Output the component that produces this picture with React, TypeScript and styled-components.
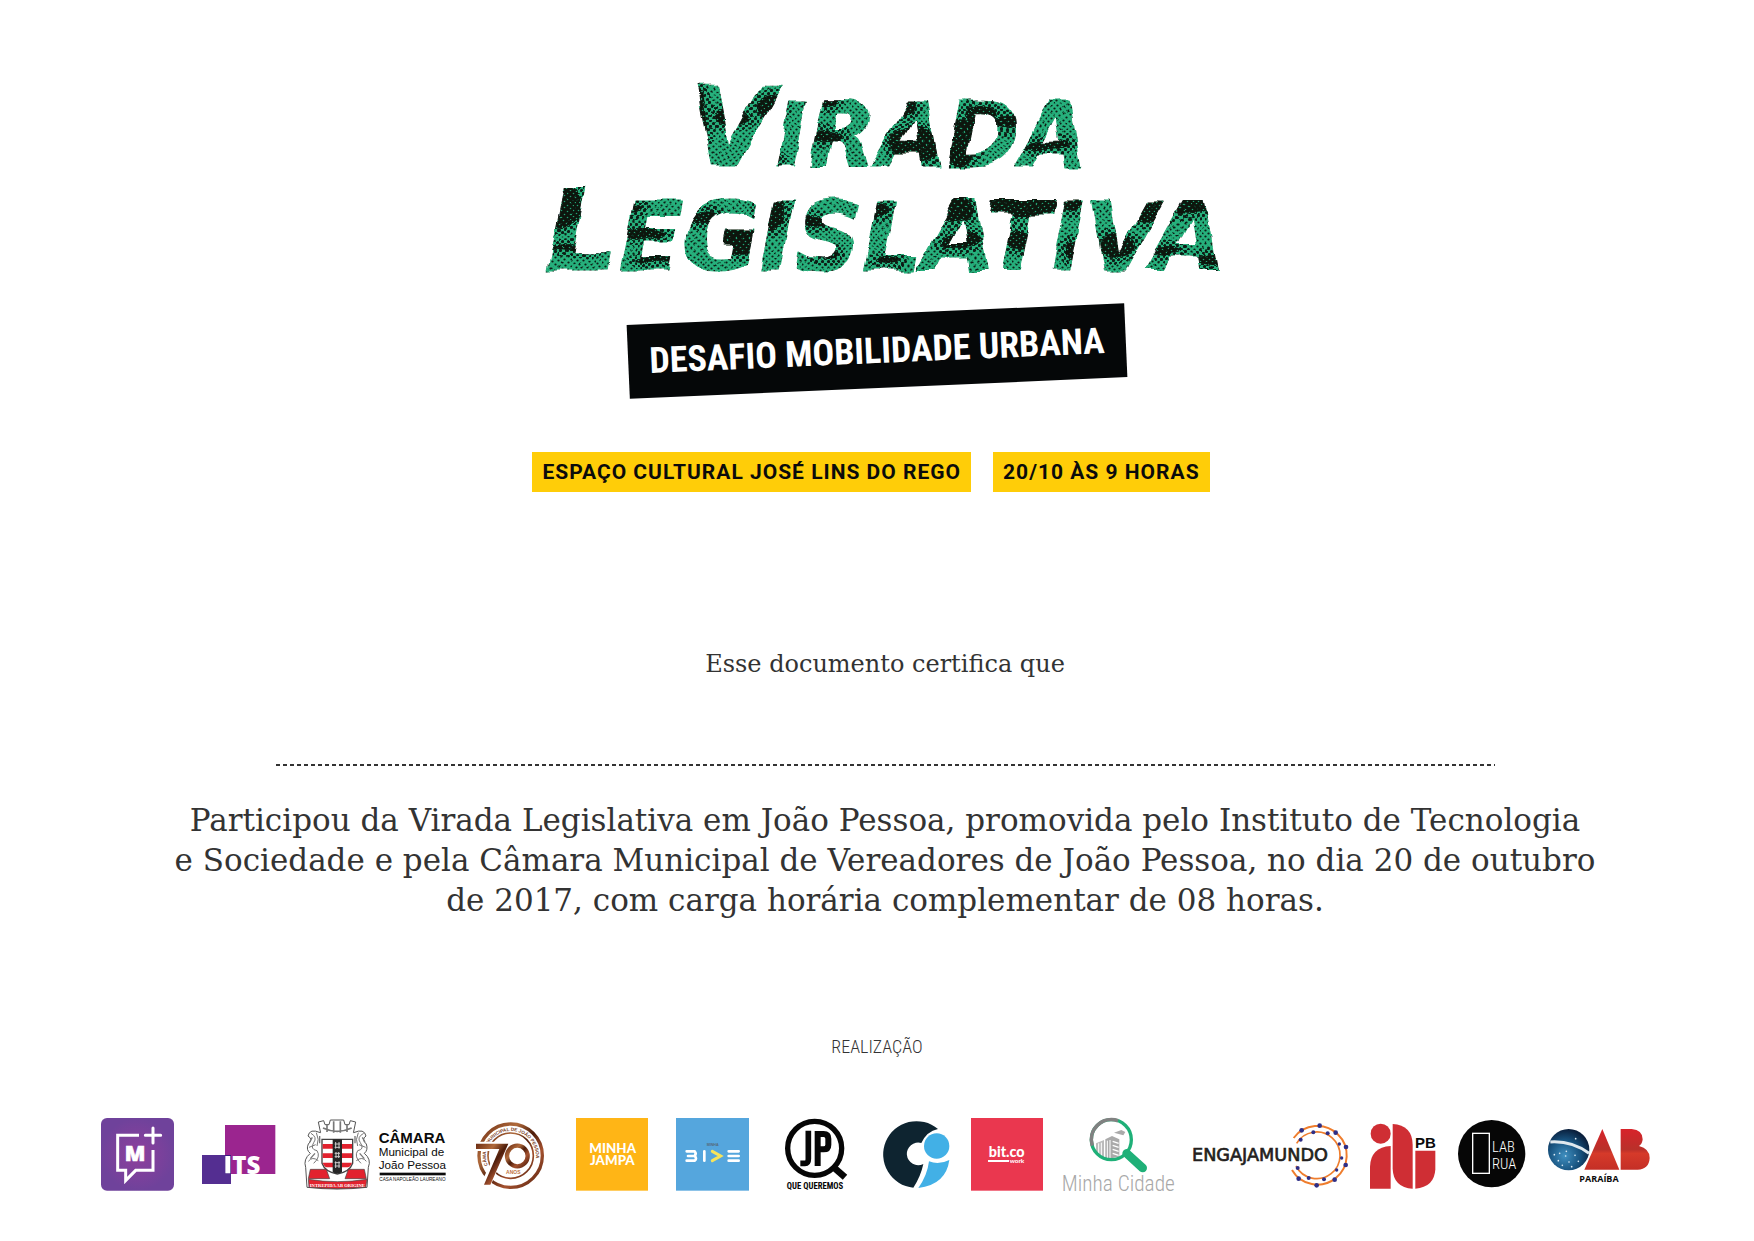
import React from "react";
import styled, { createGlobalStyle } from "styled-components";

const GlobalStyle = createGlobalStyle`
  body { margin: 0; background: #fff; }
  *, *::before, *::after { box-sizing: border-box; }
`;

const narrow = `"Roboto Condensed", "DejaVu Sans Condensed", sans-serif`;

const Page = styled.main`
  display: flex;
  flex-direction: column;
  align-items: center;
  padding: 71px 40px 40px;
  color: #333;
`;

const Title = styled.h1`
  margin: 0;
  line-height: 0;
`;

const TitleArt = styled.svg`
  width: 720px;
  max-width: 100%;
  font-family: "DejaVu Sans", sans-serif;
  font-weight: 700;
  font-style: italic;
`;

const Challenge = styled.h2`
  display: flex;
  align-items: center;
  justify-content: center;
  width: 498px;
  height: 74px;
  margin: 33px 0 64px;
  background: #050708;
  color: #fff;
  font: 700 36px/40px ${narrow};
  transform: rotate(-2.5deg);
`;

const Labels = styled.div`
  display: flex;
  flex-wrap: wrap;
  gap: 22px;
  margin-right: 12px;
`;

const Label = styled.span`
  padding: 0 10px;
  background: #ffcd08;
  color: #0b0b0b;
  font: 700 21px/40px Roboto, sans-serif;
  letter-spacing: 1px;
`;

const Certificate = styled.section`
  display: flex;
  flex-direction: column;
  align-items: center;
  width: 100%;
  padding-left: 16px;
  text-align: center;
  font-family: "DejaVu Serif", serif;
`;

const Intro = styled.p`
  margin: 156px 0 0;
  font-size: 24px;
  line-height: 32px;
`;

const NameLine = styled.div`
  width: 1219px;
  max-width: 100%;
  height: 2px;
  margin: 84px 0 34px;
  background: repeating-linear-gradient(90deg, #333 0 4px, transparent 4px 7px);
`;

const Statement = styled.p`
  margin: 0;
  font-size: 31px;
  line-height: 40px;
`;

const Line = styled.span`
  display: block;
`;

const Heading = styled.h3`
  margin: 115px 0 55px;
  font: 300 18px/24px ${narrow};
`;

const Logos = styled.footer`
  display: flex;
  flex-wrap: wrap;
  justify-content: center;
  gap: 16px;
  width: 100%;
  padding-right: 4px;
`;

const Mark = styled.svg<{ $w: number }>`
  flex: none;
  width: ${(p) => p.$w}px;
  height: 80px;
`;

/* Every mark is drawn on a board three times its printed size. */
function Logo({ x, w, name, children }: { x: number; w: number; name: string; children: React.ReactNode }) {
  return (
    <Mark $w={w} viewBox={`${x} 42 ${w * 3} 240`} role="img" aria-label={name}>
      {children}
    </Mark>
  );
}

const darkPatches: [number, number, number, number][] = [
  [168, 52, 12, 36], [205, 46, 18, 9], [244, 36, 14, 12], [242, 88, 12, 5],
  [300, 66, 16, 6], [297, 30, 14, 6], [370, 34, 18, 9], [388, 74, 24, 18],
  [430, 72, 22, 22], [454, 48, 16, 14], [480, 52, 12, 5], [520, 74, 22, 5], [506, 28, 12, 6],
  [36, 134, 20, 22], [50, 178, 28, 3], [100, 138, 14, 4], [116, 162, 22, 6], [130, 188, 22, 3],
  [176, 148, 18, 6], [212, 170, 22, 12], [244, 140, 13, 20], [284, 150, 18, 5], [300, 184, 12, 4],
  [350, 140, 12, 8], [360, 190, 12, 4], [426, 138, 20, 12], [434, 170, 20, 8],
  [494, 134, 42, 11], [492, 168, 14, 10], [545, 134, 10, 6], [548, 180, 10, 10],
  [624, 140, 22, 12], [590, 174, 18, 11], [664, 134, 22, 9], [640, 180, 14, 4], [686, 188, 16, 6],
];

function HalftonePattern({ id, ground, dot, r }: { id: string; ground: string; dot: string; r: number }) {
  return (
    <pattern id={id} width="6" height="6" patternUnits="userSpaceOnUse">
      <rect width="6" height="6" fill={ground} />
      <circle cx="1.5" cy="1.5" r={r} fill={dot} />
      <circle cx="4.5" cy="4.5" r={r} fill={dot} />
    </pattern>
  );
}

function TitleLettering() {
  return (
    <TitleArt viewBox="-10 0 720 210">
      <defs>
        <HalftonePattern id="dots" ground="#27b07b" dot="#0a1c12" r={1.1} />
        <HalftonePattern id="midDots" ground="#27b07b" dot="#0a1c12" r={1.6} />
        <HalftonePattern id="darkDots" ground="#08130c" dot="#27a071" r={0.8} />
        <pattern id="ink" x="-10" width="720" height="210" patternUnits="userSpaceOnUse">
          <rect width="720" height="210" fill="url(#dots)" />
          {darkPatches.map(([cx, cy, rx, ry], i) => (
            <ellipse key={i} cx={cx + 10} cy={cy} rx={rx + 8} ry={ry + 7} fill="url(#midDots)" />
          ))}
          {darkPatches.map(([cx, cy, rx, ry], i) => (
            <ellipse key={i} cx={cx + 10} cy={cy} rx={rx} ry={ry} fill="url(#darkDots)" />
          ))}
        </pattern>
        <filter id="brush" filterUnits="userSpaceOnUse" x="-10" y="0" width="720" height="210">
          <feTurbulence type="fractalNoise" baseFrequency="0.035" numOctaves="2" seed="4" />
          <feDisplacementMap in="SourceGraphic" scale="10" xChannelSelector="R" yChannelSelector="G" />
        </filter>
      </defs>
      <g fill="url(#ink)" stroke="url(#ink)" strokeWidth="1" strokeLinejoin="round" textAnchor="middle" filter="url(#brush)">
        <text x="362" y="95" fontSize="110">V<tspan fontSize="89">IRADA</tspan></text>
        <text x="358" y="199" fontSize="114">L<tspan fontSize="94">EGISLATIVA</tspan></text>
      </g>
    </TitleArt>
  );
}

const ringDots: [number, number, number][] = [
  [365, 91, 7], [419, 77, 7], [467, 98, 7], [498, 141, 7], [497, 195, 7], [464, 239, 7], [410, 256, 7], [356, 236, 7],
  [362, 119, 6], [400, 97, 6], [443, 100, 6], [478, 132, 5], [485, 174, 5], [470, 210, 5], [432, 238, 6], [386, 234, 6], [353, 204, 6],
];

export default function App() {
  return (
    <Page>
      <GlobalStyle />
      <Title><TitleLettering /></Title>
      <Challenge>DESAFIO MOBILIDADE URBANA</Challenge>
      <Labels>
        <Label>ESPAÇO CULTURAL JOSÉ LINS DO REGO</Label>
        <Label>20/10 ÀS 9 HORAS</Label>
      </Labels>

      <Certificate>
        <Intro>Esse documento certifica que</Intro>
        <NameLine />
        <Statement>
          <Line>Participou da Virada Legislativa em João Pessoa, promovida pelo Instituto de Tecnologia</Line>
          <Line>e Sociedade e pela Câmara Municipal de Vereadores de João Pessoa, no dia 20 de outubro</Line>
          <Line>de 2017, com carga horária complementar de 08 horas.</Line>
        </Statement>
      </Certificate>

      <Heading>REALIZAÇÃO</Heading>

      <Logos>
        <Logo x={33} w={85} name="Mudamos+">
          <defs>
            <radialGradient id="violet"><stop offset="0" stopColor="#8e3f9c" /><stop offset="1" stopColor="#6f429b" /></radialGradient>
          </defs>
          <rect x="33" y="54" width="219" height="218" rx="18" fill="url(#violet)" />
          <path d="M147 106H83V211H107V242L137 211H189V150" fill="none" stroke="#fff" strokeWidth="9" />
          <path d="M189 84V129M166 106H212" stroke="#fff" strokeWidth="9" strokeLinecap="round" />
          <text x="135" y="183" textAnchor="middle" fill="#fff" stroke="#fff" strokeWidth="2" fontFamily="Open Sans" fontWeight="800" fontSize="64">M</text>
        </Logo>

        <Logo x={335} w={86} name="ITS">
          <rect x="404" y="75" width="151" height="147" fill="#9b258f" />
          <rect x="335" y="165" width="87" height="87" fill="#542e91" />
          <path d="M404 165H422V222H404Z" fill="#3b1a80" />
          <path d="M405 168H420V220H405Z" fill="#fff" />
          <text x="426" y="221" fill="#fff" fontFamily="Open Sans" fontWeight="800" fontSize="72">TS</text>
        </Logo>

        <Logo x={643} w={156} name="Câmara Municipal de João Pessoa">
          <g stroke="#555" strokeWidth="3" fill="#fff">
            <path d="M686 66L702 62L706 74H718L722 60H762L766 74H778L782 62L798 66L790 104Q742 128 694 104Z" />
            <path d="M692 98Q660 84 655 108Q672 118 656 132Q648 150 662 160Q640 178 648 202L652 262Q742 272 832 262L836 202Q846 178 824 160Q836 150 830 132Q814 118 829 108Q824 84 792 98" />
          </g>
          <g fill="none" stroke="#777" strokeWidth="3">
            <path d="M664 100Q684 112 672 128Q660 148 682 152Q694 170 672 190M680 98Q690 118 682 138M822 100Q800 112 812 128Q826 148 804 152Q792 170 814 190M806 98Q796 118 804 138M658 142L678 134M828 142L808 134M656 184Q668 168 686 182M830 184Q818 168 800 182" />
            <path d="M700 84Q742 104 786 84M712 74V96M732 64V98M752 64V98M772 74V96" strokeWidth="5" />
            <path d="M668 112L660 126M676 160L662 176M818 112L826 126M810 160L824 176M690 108V130M796 108V130" strokeWidth="4" />
          </g>
          <path d="M697 118H789V190Q780 216 743 222Q706 216 697 190Z" fill="#fff" stroke="#444" strokeWidth="4" />
          <path d="M699 132H787V146H699ZM699 160H787V174H699ZM699 188H787Q783 200 774 202H712Q703 200 699 188Z" fill="#e2222e" />
          <path d="M729 118H757V217Q743 224 729 217Z" fill="#262626" />
          <path d="M735 132H751M735 142H751M738 126V146M748 126V146M735 160H751M735 170H751M739 156V174M747 156V174M735 188H751M735 198H751M738 184V204M748 184V204" stroke="#ccc" strokeWidth="3" />
          <path d="M662 208H710L720 236H656ZM776 208H824L830 236H766ZM656 238Q742 252 832 238L828 262Q742 270 658 262Z" fill="#e2222e" stroke="#444" strokeWidth="2" />
          <text x="743" y="261" textAnchor="middle" fill="#fff" fontFamily="Liberation Serif" fontWeight="700" fontSize="14">INTREPIDA AB ORIGINE</text>
          <g fill="#0b0b0b" fontFamily="Liberation Sans">
            <text x="867" y="129" fontSize="45" fontWeight="700">CÂMARA</text>
            <text x="867" y="167" fontSize="35">Municipal de</text>
            <text x="867" y="206" fontSize="35">João Pessoa</text>
            <rect x="870" y="218" width="198" height="8" />
            <text x="869" y="243" fontSize="14">CASA NAPOLEÃO LAUREANO</text>
          </g>
        </Logo>

        <Logo x={48} w={84} name="Câmara Municipal de João Pessoa 70 anos">
          <defs>
            <linearGradient id="copper" x1="0" y1="0" x2="1" y2="1">
              <stop offset="0" stopColor="#6b2c12" /><stop offset="0.3" stopColor="#b06a3b" /><stop offset="0.5" stopColor="#4d1c0a" /><stop offset="0.7" stopColor="#a5522f" /><stop offset="1" stopColor="#54200d" />
            </linearGradient>
            <path id="ringText" d="M83 196A75 75 0 1 1 222 196" />
          </defs>
          <circle cx="152" cy="167" r="95" fill="none" stroke="url(#copper)" strokeWidth="10" />
          <circle cx="152" cy="167" r="68" fill="none" stroke="url(#copper)" strokeWidth="5" />
          <text fill="#7a3b1c" fontFamily="Liberation Sans" fontWeight="700" fontSize="14"><textPath href="#ringText">CÂMARA MUNICIPAL DE JOÃO PESSOA</textPath></text>
          <path d="M48 139H130L78 252" fill="none" stroke="#fff" strokeWidth="28" />
          <circle cx="172" cy="168" r="32" fill="none" stroke="#fff" strokeWidth="20" />
          <path d="M48 131H145L91 254H72L118 147H48Z" fill="url(#copper)" />
          <circle cx="172" cy="168" r="31" fill="none" stroke="url(#copper)" strokeWidth="13" />
          <text x="160" y="222" textAnchor="middle" fill="#c0733f" fontFamily="Liberation Sans" fontWeight="700" fontSize="15">ANOS</text>
        </Logo>

        <Logo x={348} w={84} name="Minha Jampa">
          <rect x="348" y="54" width="216" height="218" fill="#ffb516" />
          <g fill="#fff" textAnchor="middle" fontFamily="Lato" fontWeight="900">
            <text x="458" y="160" fontSize="40">MINHA</text>
            <text x="457" y="195" fontSize="40">JAMPA</text>
          </g>
        </Logo>

        <Logo x={648} w={93} name="Bike">
          <rect x="648" y="54" width="219" height="218" fill="#55a6dd" />
          <text x="758" y="138" textAnchor="middle" fill="#56697a" fontFamily="Liberation Sans" fontWeight="700" fontSize="11">MINHA</text>
          <g fill="none" stroke="#fff" strokeWidth="8" strokeLinecap="round">
            <path d="M680 154H704Q710 160 704 168H684M704 168Q712 176 704 182H680M733 154V182M806 154H836M806 168H836M806 182H836" />
            <path d="M757 154L782 168L757 182" stroke="#f7e45a" strokeWidth="9" />
          </g>
        </Logo>

        <Logo x={974} w={82} name="JP que queremos">
          <circle cx="1063" cy="145" r="81" fill="none" stroke="#060606" strokeWidth="16" />
          <path d="M1118 200L1154 232" stroke="#060606" strokeWidth="20" />
          <path d="M1044 92V176Q1044 190 1034 190H1020" fill="none" stroke="#060606" strokeWidth="17" />
          <path d="M1072 198V102H1090Q1104 102 1104 116V134Q1104 148 1090 148H1072" fill="none" stroke="#060606" strokeWidth="18" />
          <text x="1064" y="267" textAnchor="middle" fill="#060606" fontFamily="Roboto Condensed" fontWeight="700" fontSize="26">QUE QUEREMOS</text>
        </Logo>

        <Logo x={69} w={72} name="C9">
          <path d="M234 87A100 100 0 1 0 160 263Q182 230 190 192A34 34 0 1 1 184 129Q200 94 234 87Z" fill="#0e2430" />
          <circle cx="230" cy="138" r="38" fill="#42b0e6" />
          <path d="M207 184Q236 196 268 180Q258 254 175 264Q202 226 207 184Z" fill="#42b0e6" />
        </Logo>

        <Logo x={333} w={75} name="bit.co work">
          <rect x="333" y="54" width="216" height="218" fill="#ea374f" />
          <text x="440" y="172" textAnchor="middle" fill="#fff" fontFamily="Lato" fontWeight="900" fontSize="43">bit.co</text>
          <rect x="384" y="180" width="63" height="6" fill="#fff" />
          <text x="449" y="188" fill="#fff" fontFamily="Lato" fontWeight="900" fontSize="19">work</text>
        </Logo>

        <Logo x={606} w={114} name="Minha Cidade">
          <g fill="#aaa">
            <path d="M736 118L756 108L778 118V170L736 178Z" />
            <path d="M708 130L732 120V178L708 162Z" fill="#bbb" />
            <path d="M762 98L784 90L796 96L790 106Z" />
            <path d="M742 122V174M750 120V174M716 130V164M724 128V168" stroke="#fff" strokeWidth="3" />
            <path d="M758 124L776 130M758 136L776 142M758 148L776 154M758 160L776 166" stroke="#fff" strokeWidth="4" />
          </g>
          <circle cx="754" cy="119" r="60" fill="none" stroke="#1fb078" strokeWidth="10" />
          <path d="M697 137A60 60 0 0 1 774 62" fill="none" stroke="#818181" strokeWidth="11" />
          <path d="M800 160L848 204" stroke="#1fb078" strokeWidth="26" strokeLinecap="round" />
          <text x="775" y="272" textAnchor="middle" fill="#a8a8a8" fontFamily="Roboto Condensed" fontWeight="300" fontSize="64">Minha Cidade</text>
        </Logo>

        <Logo x={36} w={162} name="Engajamundo">
          <g fill="none" stroke="#ef7d2d" strokeWidth="5">
            <path d="M341 114A88 88 0 1 1 336 210" strokeWidth="6" />
            <path d="M350 130A70 70 0 1 1 348 198" />
          </g>
          {ringDots.map(([cx, cy, r], i) => <circle key={i} cx={cx} cy={cy} r={r} fill="#2f2f86" />)}
          <text x="36" y="183" fill="#231f20" stroke="#231f20" strokeWidth="2" fontFamily="DejaVu Sans" fontWeight="400" fontSize="53">ENGAJAMUNDO</text>
        </Logo>

        <Logo x={571} w={72} name="IAB PB">
          <g fill="#cf2e34">
            <circle cx="603" cy="101" r="30" />
            <path d="M571 266V200Q573 142 633 138V266Z" />
            <path d="M639 72Q698 76 699 134V266Q641 262 639 206Z" />
            <path d="M707 152H767V208Q764 262 707 266Z" />
          </g>
          <text x="706" y="144" fill="#0b0b0b" fontFamily="Liberation Sans" fontWeight="700" fontSize="45">PB</text>
        </Logo>

        <Logo x={834} w={74} name="Lab Rua">
          <circle cx="935" cy="161" r="101" fill="#060606" />
          <rect x="878" y="100" width="50" height="120" fill="none" stroke="#fff" strokeWidth="4" />
          <g fill="#fff" fontFamily="Roboto Condensed" fontWeight="300" fontSize="44">
            <text x="936" y="156">LAB</text>
            <text x="936" y="206">RUA</text>
          </g>
        </Logo>

        <Logo x={1105} w={102} name="OAB Paraíba">
          <defs>
            <radialGradient id="globe" cx="0.4" cy="0.65" r="0.65"><stop offset="0" stopColor="#3f8fc0" /><stop offset="0.6" stopColor="#17517d" /><stop offset="1" stopColor="#0a1f3c" /></radialGradient>
            <linearGradient id="red" x1="0" y1="0" x2="0" y2="1"><stop offset="0" stopColor="#d8232a" /><stop offset="0.5" stopColor="#b9302a" /><stop offset="0.6" stopColor="#d63a2a" /><stop offset="1" stopColor="#c42f26" /></linearGradient>
          </defs>
          <circle cx="1167" cy="149" r="62" fill="url(#globe)" />
          <path d="M1112 126Q1176 122 1228 160" fill="none" stroke="#dfe8ee" strokeWidth="9" />
          <g fill="#dcebf5">
            {[[1140, 160], [1158, 168], [1136, 182], [1168, 186], [1186, 166], [1148, 196], [1176, 200], [1196, 184], [1124, 164], [1160, 154], [1188, 116]].map(([x, y]) => <circle key={x} cx={x} cy={y} r="2.5" />)}
          </g>
          <path d="M1268 87L1319 209H1214Z" fill="url(#red)" />
          <path d="M1323 87H1356Q1389 90 1389 118Q1388 132 1378 138Q1410 146 1410 174Q1408 208 1374 209H1323Z" fill="url(#red)" />
          <text x="1258" y="246" textAnchor="middle" fill="#0b0b0b" fontFamily="Open Sans" fontWeight="700" fontSize="27">PARAÍBA</text>
        </Logo>
      </Logos>
    </Page>
  );
}
